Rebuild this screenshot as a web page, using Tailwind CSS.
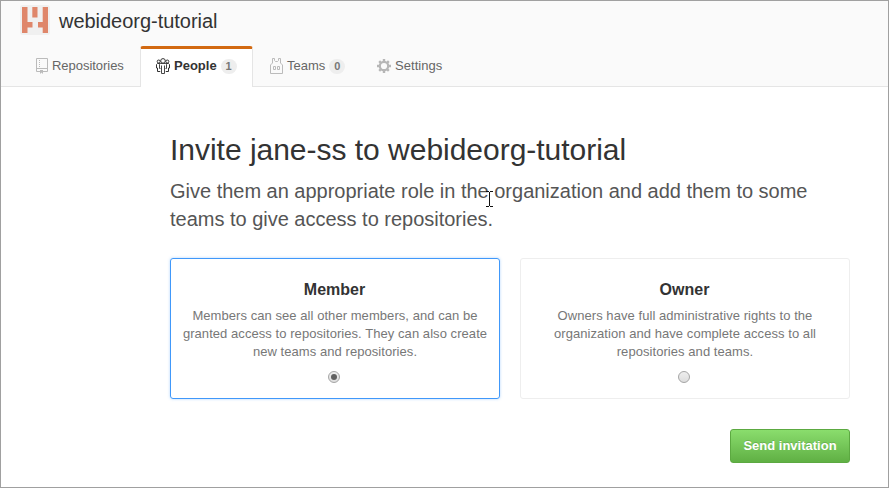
<!DOCTYPE html>
<html lang="en">
<head>
<meta charset="utf-8">
<title>Invite jane-ss to webideorg-tutorial</title>
<script src="https://cdn.jsdelivr.net/npm/@tailwindcss/browser@4"></script>
</head>
<body class="h-[488px] w-[889px] overflow-hidden bg-white font-['Liberation_Sans',Arial,sans-serif] text-[#333]">
<div class="relative flex h-[488px] w-[889px] flex-col border border-[#a0a0a0]">
  <header class="flex h-[86px] shrink-0 flex-col justify-between border-b border-[#e5e5e5] bg-[#fafafa]">
    <div class="flex items-start gap-[9px] pt-1 pl-[19px]">
      <svg class="size-[30px] rounded-[3px] bg-[#f0f0f0]" viewBox="0 0 30 30" fill="#df866a"><path d="M2 2h5.500v15H12.500v5.500H7.500V28H2zM12.300 2h5.200v10.500h-5.200zM22.700 2H28v26h-5.300v-5.500H18V17h4.700z"/></svg>
      <span class="pt-px text-[20px] leading-[30px] tracking-[-0.03px]">webideorg-tutorial</span>
    </div>
    <nav class="-mb-px flex h-[41px] pl-[19px] text-[13px] leading-[18px] text-[#666]">
      <a class="flex w-[120px] items-start gap-1 pt-[11px] pl-4">
        <svg class="mt-px h-4 w-3 shrink-0" viewBox="0 0 12 16" fill="none" stroke="#bbb"><path d="M4 13.500H.5V.5h11v13H7M.5 10.500h11"/><path d="M3.500 2v8" stroke-dasharray="1 1"/><path d="M4 12h3v4l-1.500-1.500L4 16z" fill="#bbb" stroke="none"/></svg>
        <span class="tracking-[-0.04px]">Repositories</span>
      </a>
      <a class="flex w-[113px] items-start rounded-t-[3px] border-x border-t-[3px] border-x-[#e5e5e5] border-t-[#d26911] bg-white pt-2 pl-[15px] font-bold text-[#333]">
        <svg class="mt-px h-4 w-[14px] shrink-0" viewBox="0 0 14 16" fill="#fff" stroke="#333"><circle cx="2.700" cy="3.500" r="1.500"/><circle cx="11.300" cy="3.500" r="1.500"/><path d="M4.500 13.500h-3V10h-1V6.500l1-1h3M9.500 13.500h3V10h1V6.500l-1-1h-3"/><path d="M4 5.500h6l.5 1v4h-1v5h-5v-5h-1v-4z" stroke="none"/><path d="M4.500 10.500h-1v-4l1-1h5l1 1v4h-1M5.500 7.500v8h3v-8" fill="none" stroke-width=".9"/><circle cx="7" cy="2.900" r="2.300"/></svg>
        <span class="ml-1">People</span>
        <span class="mt-[2px] ml-1 h-[15px] w-4 rounded-full bg-[#eee] text-center text-[11px] leading-[15px] text-[#777]">1</span>
      </a>
      <a class="flex w-[107px] items-start pt-[11px] pl-[17px]">
        <svg class="mt-px h-4 w-[13px] shrink-0" viewBox="0 0 13 16" fill="none" stroke="#bbb"><path d="M2.500.5h2v2l1 1h2l1-1v-2h2v4.500l2 2v8.500H.5V7l2-2zM3.500 8.500h2v3h-2zM7.500 8.500h2v3h-2z"/></svg>
        <span class="ml-1">Teams</span>
        <span class="mt-[2px] ml-1 h-[15px] w-4 rounded-full bg-[#eee] text-center text-[11px] font-bold leading-[15px] text-[#777]">0</span>
      </a>
      <a class="flex items-start gap-1 pt-[11px] pl-[17px]">
        <svg class="mt-[2px] size-[14px] shrink-0" viewBox="-7 -7 14 14" stroke="#b6b6b6" fill="none"><circle r="4.200" stroke-width="2.200"/><path stroke-width="2.400" d="M0-7v3M0 7V4M-7 0h3M7 0H4M-4.800-4.800l1.800 1.800M4.800 4.800L3 3M-4.800 4.800L-3 3M4.800-4.800L3-3"/></svg>
        <span class="tracking-[0.04px]">Settings</span>
      </a>
    </nav>
  </header>
  <main class="flex w-[849px] flex-col pt-[45px] pl-[169px]">
    <h1 class="text-[30px] leading-[36px] tracking-[-0.02px]">Invite jane-ss to webideorg-tutorial</h1>
    <p class="mt-[9px] text-[20px] leading-[28px] tracking-[-0.01px] text-[#555]">Give them an appropriate role in the organization and add them to some<br>teams to give access to repositories.</p>
    <div class="mt-[25px] flex gap-5">
      <label class="flex h-[141px] w-[330px] flex-col items-center rounded-[3px] border border-[#4098fa] pt-5 text-center shadow-[0_0_3px_rgba(64,152,250,0.4)]">
        <span class="mr-px text-[16px] font-bold leading-[22px]">Member</span>
        <span class="mt-[6px] text-[13px] leading-[18px] tracking-[0.06px] text-[#777]">Members can see all other members, and can be<br>granted access to repositories. They can also create<br>new teams and repositories.</span>
        <span class="mt-[10px] mr-[2px] flex size-3 items-center justify-center rounded-full border border-[#a5a5a5] bg-gradient-to-b from-[#eee] to-[#ddd]"><span class="size-[6px] rounded-full bg-[#606060]"></span></span>
      </label>
      <label class="flex h-[141px] w-[330px] flex-col items-center rounded-[3px] border border-[#eee] pt-5 text-center">
        <span class="mr-px text-[16px] font-bold leading-[22px]">Owner</span>
        <span class="mt-[6px] text-[13px] leading-[18px] tracking-[0.06px] text-[#777]">Owners have full administrative rights to the<br>organization and have complete access to all<br>repositories and teams.</span>
        <span class="mt-[10px] mr-[2px] size-3 rounded-full border border-[#a5a5a5] bg-gradient-to-b from-[#eee] to-[#ddd]"></span>
      </label>
    </div>
    <button class="mt-[30px] h-[34px] w-[120px] self-end rounded-[3px] border border-[#5ca941] bg-gradient-to-b from-[#8add6d] to-[#60b044] text-[13px] font-bold text-white [text-shadow:0_-1px_0_rgba(0,0,0,0.15)]">Send invitation</button>
  </main>
  <svg class="absolute top-[190px] left-[485px] h-4 w-[7px]" viewBox="0 0 7 16" fill="none" stroke="#111"><path d="M0 .5h3M4 .5h3M3.500 1v14M0 15.500h3M4 15.500h3"/></svg>
</div>
</body>
</html>
